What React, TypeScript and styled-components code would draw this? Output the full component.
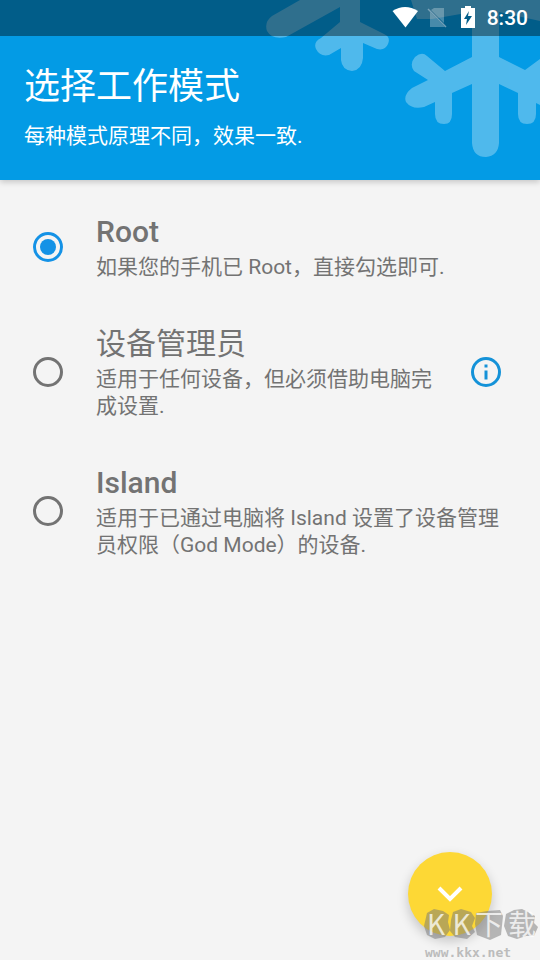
import React from "react";
import styled, { createGlobalStyle } from "styled-components";

const GlobalStyle = createGlobalStyle`
  *, *::before, *::after { box-sizing: border-box; }
  body {
    margin: 0;
    background: #f4f4f4;
    color: #737373;
    font-family: Roboto, "Noto Sans CJK SC", sans-serif;
  }
`;

const Screen = styled.div`
  display: flex;
  flex-direction: column;
  min-height: 100vh;
`;

const Header = styled.header`
  position: relative;
  overflow: hidden;
  color: #ffffff;
  background: #039be5;
`;

const HeaderShadow = styled.div`
  box-shadow: 0 2px 6px rgba(0, 0, 0, 0.2);
`;

const Snow = styled.svg`
  position: absolute;
  top: 0;
  right: 0;
`;

const StatusBar = styled.div`
  position: relative;
  display: flex;
  align-items: center;
  justify-content: flex-end;
  height: 36px;
  padding-right: 12px;
  background: rgba(0, 0, 0, 0.4);
`;

const StatusIcons = styled.svg`
  display: block;
  margin-right: 11px;
`;

const Clock = styled.time`
  font-size: 21px;
  line-height: 36px;
  font-weight: 500;
`;

const HeaderText = styled.div`
  position: relative;
  padding: 24px 24px 28px;
`;

const PageTitle = styled.h1`
  margin: 0;
  font-size: 36px;
  line-height: 54px;
  font-weight: 400;
`;

const Subtitle = styled.p`
  margin: 0;
  padding-top: 6px;
  font-size: 21px;
  line-height: 32px;
`;

const Options = styled.main`
  display: flex;
  flex-direction: column;
  gap: 43px;
  padding: 32px 24px;
`;

const Option = styled.div`
  display: flex;
  align-items: center;
`;

const Radio = styled.input`
  appearance: none;
  flex: none;
  display: grid;
  place-items: center;
  width: 30px;
  height: 30px;
  margin: 0 33px 0 9px;
  border: 3px solid #737373;
  border-radius: 50%;
  cursor: pointer;

  &:checked { border-color: #1492e6; }
  &:checked::before {
    content: "";
    width: 16px;
    height: 16px;
    border-radius: 50%;
    background: #1492e6;
  }
`;

const OptionLabel = styled.label`
  flex: 1;
  cursor: pointer;
`;

const OptionTitle = styled.span`
  display: block;
  margin-bottom: 2px;
  font-size: 30px;
  line-height: 40px;
  font-weight: 500;

  &:lang(zh) { font-weight: 400; }
`;

const Description = styled.span`
  display: block;
  font-size: 21px;
  line-height: 27px;
`;

const InfoButton = styled.button`
  display: block;
  flex: none;
  margin: 0 14px 0 24px;
  padding: 0;
  border: 0;
  background: none;
  color: #1492d8;
  cursor: pointer;

  svg { display: block; }
`;

const Footer = styled.footer`
  position: relative;
  display: flex;
  justify-content: flex-end;
  margin-top: auto;
  padding: 0 48px 24px;
`;

const NextButton = styled.button`
  display: grid;
  place-items: center;
  width: 84px;
  height: 84px;
  padding: 0;
  border: 0;
  border-radius: 50%;
  background: #fdd835;
  box-shadow: 0 5px 12px rgba(0, 0, 0, 0.2);
  cursor: pointer;
`;

const Watermark = styled.div`
  position: absolute;
  right: 0;
  bottom: 0;
  width: 117px;
  pointer-events: none;
`;

const Stamp = styled.div`
  position: relative;
  svg { display: block; }
`;

const StampText = styled.span`
  position: absolute;
  inset: 0;
  display: grid;
  grid-template-columns: 26px 25px 30px 36px;
  justify-items: center;
  color: rgba(255, 255, 255, 0.75);
  font-family: "Noto Sans CJK SC", sans-serif;
  font-size: 28px;
  line-height: 31px;
`;

const StampSite = styled.span`
  display: block;
  padding: 6px 0 0 2px;
  color: #bcbcbc;
  font: bold 13px/14px "DejaVu Sans Mono", monospace;
`;

function Snowflakes() {
  return (
    <Snow width="290" height="180" viewBox="0 0 290 180" aria-hidden="true">
      <g opacity="0.3" fill="#ffffff">
        <path d="M50 0L22 16Q14 22 17 31Q22 40 36 37L90 7V22L71 38Q63 42 66 49Q70 57 79 55L91 48V60Q92 70 102 71Q112 70 113 58V43L127 49Q135 51 138 44Q141 37 134 34L110 22V0Z" />
        <path d="M222 0V57L195 71L177 56Q172 51 165 57Q159 64 164 71L178 80L162 88Q153 95 156 102Q162 110 174 107L185 102V114Q185 124 194 124Q202 124 202 114V93L222 84V143Q223 157 236 157Q248 156 249 143V84L268 93V114Q268 124 277 124Q286 124 286 114V103L290 105V59L275 70L249 57V12L290 21V0H161L167 19H182L222 12Z" fillRule="nonzero" />
      </g>
    </Snow>
  );
}

function SystemIcons() {
  return (
    <StatusIcons width="84" height="24" viewBox="0 0 84 24" aria-hidden="true">
      <path d="M.500 5Q13-3 26 5L13.500 21.500Z" fill="#ffffff" />
      <path d="M42 2H52V17L39 4Z M38 6L53 21H38Z" fill="#ffffff" opacity="0.28" />
      <path d="M36 3L54 21" stroke="#8db0c3" strokeWidth="1.500" opacity="0.8" />
      <path d="M69 2H73V0H79V2H83V22H69Z M77 5L72 13H75L74 19L80 10H76Z" fill="#ffffff" fillRule="evenodd" />
    </StatusIcons>
  );
}

const modes = [
  { id: "root", title: "Root", lang: "en", text: "如果您的手机已 Root，直接勾选即可." },
  { id: "admin", title: "设备管理员", lang: "zh", text: "适用于任何设备，但必须借助电脑完成设置.", info: true },
  { id: "island", title: "Island", lang: "en", text: "适用于已通过电脑将 Island 设置了设备管理员权限（God Mode）的设备." },
];

export default function App() {
  return (
    <Screen lang="zh-CN">
      <GlobalStyle />
      <HeaderShadow>
        <Header>
          <Snowflakes />
          <StatusBar>
            <SystemIcons />
            <Clock>8:30</Clock>
          </StatusBar>
          <HeaderText>
            <PageTitle>选择工作模式</PageTitle>
            <Subtitle>每种模式原理不同，效果一致.</Subtitle>
          </HeaderText>
        </Header>
      </HeaderShadow>
      <Options>
        {modes.map((mode) => (
          <Option key={mode.id}>
            <Radio type="radio" name="mode" id={mode.id} defaultChecked={mode.id === "root"} />
            <OptionLabel htmlFor={mode.id}>
              <OptionTitle lang={mode.lang}>{mode.title}</OptionTitle>
              <Description>{mode.text}</Description>
            </OptionLabel>
            {mode.info && (
              <InfoButton type="button" aria-label="详情">
                <svg width="32" height="32" viewBox="0 0 32 32" fill="currentColor">
                  <circle cx="16" cy="16" r="13.500" fill="none" stroke="currentColor" strokeWidth="3" />
                  <path d="M14.500 8.500h3v3h-3zM14.500 14.500h3v9h-3z" />
                </svg>
              </InfoButton>
            )}
          </Option>
        ))}
      </Options>
      <Footer>
        <NextButton type="button" aria-label="下一步">
          <svg width="28" height="18" viewBox="0 0 28 18" fill="none" stroke="#ffffff" strokeWidth="4">
            <path d="M3 3L14 14L25 3" />
          </svg>
        </NextButton>
        <Watermark>
          <Stamp>
            <svg width="117" height="32" viewBox="0 0 117 32" fill="#777777" opacity="0.5">
              <path d="M4 5L11 1L20 3L26 7L25 14L27 22L22 29L12 31L4 27L1 18Z" />
              <path d="M30 4L38 1L48 4L52 10L49 18L52 24L44 31L32 29L27 23L28 12Z" />
              <path d="M53 5L64 3L77 2L80 8L78 27L67 32L54 27L52 16Z" />
              <path d="M83 6L91 2L99 1L105 4L112 8L111 15L115 19L111 28L103 28L94 31L85 28L81 18Z" />
            </svg>
            <StampText><span>K</span><span>K</span><span>下</span><span>载</span></StampText>
          </Stamp>
          <StampSite>www.kkx.net</StampSite>
        </Watermark>
      </Footer>
    </Screen>
  );
}
